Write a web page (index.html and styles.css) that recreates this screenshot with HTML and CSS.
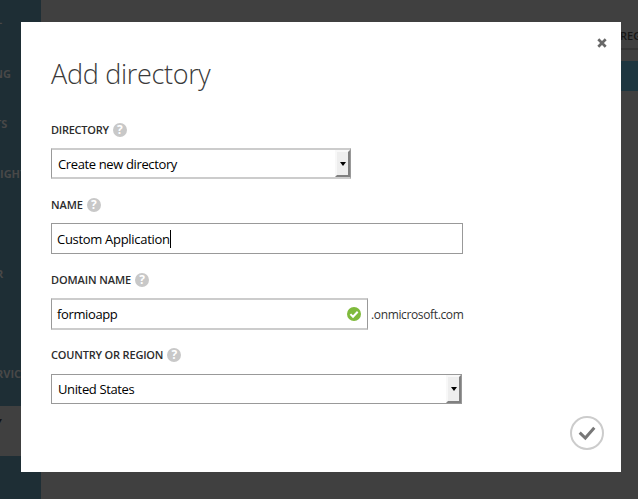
FILE: index.html
```html
<!DOCTYPE html>
<html lang="en">
<head>
<meta charset="utf-8">
<title>Add directory</title>
<link rel="stylesheet" href="styles.css">
</head>
<body>
<div class="portal">
  <nav class="sidebar">
    <div class="item tail-l">L</div>
    <div class="item tail-ng">NG</div>
    <div class="item tail-ts">TS</div>
    <div class="item tail-right">IGHT</div>
    <div class="item"></div>
    <div class="item tail-r">R</div>
    <div class="item"></div>
    <div class="item tail-service">RVIC</div>
    <div class="item active">Y</div>
  </nav>
  <main class="content">
    <div class="column-head">REG</div>
    <div class="selected-row"></div>
  </main>
</div>
<section class="dialog">
  <svg class="close" viewBox="0 0 10 10"><path d="M1.3 1.3 8.7 8.7M8.7 1.3 1.3 8.7"/></svg>
  <h1>Add directory</h1>
  <form>
    <div class="field">
      <div class="label directory"><span>DIRECTORY</span><i class="help">?</i></div>
      <div class="control select soft short"><span class="value">Create new directory</span><span class="drop"></span></div>
    </div>
    <div class="field">
      <div class="label name"><span>NAME</span><i class="help">?</i></div>
      <div class="control text"><span class="value name-value">Custom Application</span><span class="caret"></span></div>
    </div>
    <div class="field">
      <div class="label domain-label"><span>DOMAIN NAME</span><i class="help">?</i></div>
      <div class="row">
        <div class="control text soft domain"><span class="value">formioapp</span>
          <svg class="valid" viewBox="0 0 14 14"><circle cx="7" cy="7" r="7"/><path d="M3.4 7.1 6 9.7 10.7 4.7"/></svg>
        </div>
        <span class="suffix">.onmicrosoft.com</span>
      </div>
    </div>
    <div class="field">
      <div class="label country"><span>COUNTRY OR REGION</span><i class="help">?</i></div>
      <div class="control select long"><span class="value">United States</span><span class="drop"></span></div>
    </div>
  </form>
  <svg class="submit" viewBox="0 0 34 34"><circle cx="17" cy="17" r="16"/><path d="M9.7 16.6 15.3 22 24.3 11.7"/></svg>
</section>
</body>
</html>
```
FILE: styles.css
```css
* { box-sizing: border-box; }
body {
  margin: 0;
  width: 638px;
  height: 499px;
  overflow: hidden;
  background: #404040;
  font-family: "Open Sans", "Noto Sans", sans-serif;
  color: #222;
}
.portal { display: flex; height: 499px; }
.sidebar { flex: none; width: 41px; background: #1e2e35; overflow: hidden; padding-top: 6px; }
.item {
  height: 50px;
  padding-top: 10px;
  font-size: 11px;
  line-height: 16px;
  font-weight: 700;
  color: #484848;
  white-space: nowrap;
}
.tail-l { text-indent: -4px; padding-top: 6px; }
.tail-ng { text-indent: -6px; }
.tail-ts { text-indent: -5px; }
.tail-right { text-indent: 0; }
.tail-r { text-indent: -4px; }
.tail-service { text-indent: -4px; }
.item.active { background: #404040; color: #111; text-indent: -5px; padding-top: 9px; }
.content { flex: 1; min-width: 0; padding-left: 580px; overflow: hidden; }
.column-head {
  height: 50px;
  padding-top: 28px;
  border-bottom: 2px solid #353535;
  font-size: 11px;
  line-height: 16px;
  font-weight: 600;
  color: #151515;
  text-indent: -1px;
}
.selected-row { height: 30px; margin-top: 11px; background: #1e3640; }
.dialog {
  position: absolute;
  left: 21px;
  top: 22px;
  width: 600px;
  height: 450px;
  background: #fff;
  padding: 32px 30px 0;
}
.close {
  position: absolute;
  right: 14px;
  top: 16px;
  width: 10px;
  height: 10px;
  fill: none;
  stroke: #686868;
  stroke-width: 2.7;
}
h1 {
  margin: 0;
  height: 40px;
  font-size: 27px;
  line-height: 40px;
  font-weight: 300;
  letter-spacing: -0.31px;
  color: #3a3a3a;
  white-space: nowrap;
}
form { padding-top: 26px; }
.field { height: 75px; }
.label {
  display: flex;
  align-items: center;
  gap: 4px;
  height: 20px;
  font-size: 11px;
  line-height: 20px;
  font-weight: 600;
  color: #2c2c2c;
  white-space: nowrap;
}
.directory { letter-spacing: -0.24px; }
.name { letter-spacing: -0.1px; }
.domain-label { letter-spacing: -0.1px; }
.country { letter-spacing: -0.18px; }
.help {
  width: 14px;
  height: 14px;
  border-radius: 50%;
  background: #c8c8c8;
  color: #fff;
  font-size: 12px;
  line-height: 14px;
  font-style: normal;
  font-weight: 700;
  letter-spacing: 0;
  text-align: center;
}
.control {
  display: flex;
  align-items: center;
  height: 31px;
  margin-top: 8px;
  border: 1px solid #999;
  background: #fff;
  font-size: 13px;
  line-height: 20px;
  color: #000;
  white-space: nowrap;
}
.value { letter-spacing: -0.37px; }
.name-value { letter-spacing: -0.3px; }
.text { width: 412px; padding-left: 5px; }
.select { padding-left: 6px; }
.soft { border-top: 2px solid #ccc; border-bottom: 2px solid #ccc; }
.short { width: 300px; }
.long { width: 411px; height: 30px; margin-top: 9px; }
.domain { width: 317px; height: 32px; }
.drop {
  width: 15px;
  height: 100%;
  margin-left: auto;
  display: flex;
  align-items: center;
  justify-content: center;
  background: #eee;
  border: 2px solid #f8f8f8;
  border-right-color: #808080;
  border-bottom-color: #808080;
}
.drop::before {
  content: "";
  border: 3px solid transparent;
  border-top: 4px solid #000;
  border-bottom: 0;
}
.caret { width: 1px; height: 18px; background: #000; }
.row { display: flex; }
.valid { width: 14px; height: 14px; margin-left: auto; margin-right: 6px; }
.valid circle { fill: #7fba3c; }
.valid path { fill: none; stroke: #fff; stroke-width: 2; }
.suffix { margin: 15px 0 0 3px; font-size: 12px; line-height: 20px; letter-spacing: -0.36px; color: #333; }
.submit { position: absolute; left: 549px; top: 394px; width: 34px; height: 34px; fill: none; }
.submit circle { stroke: #ccc; stroke-width: 2; }
.submit path { stroke: #777; stroke-width: 3; }
```
